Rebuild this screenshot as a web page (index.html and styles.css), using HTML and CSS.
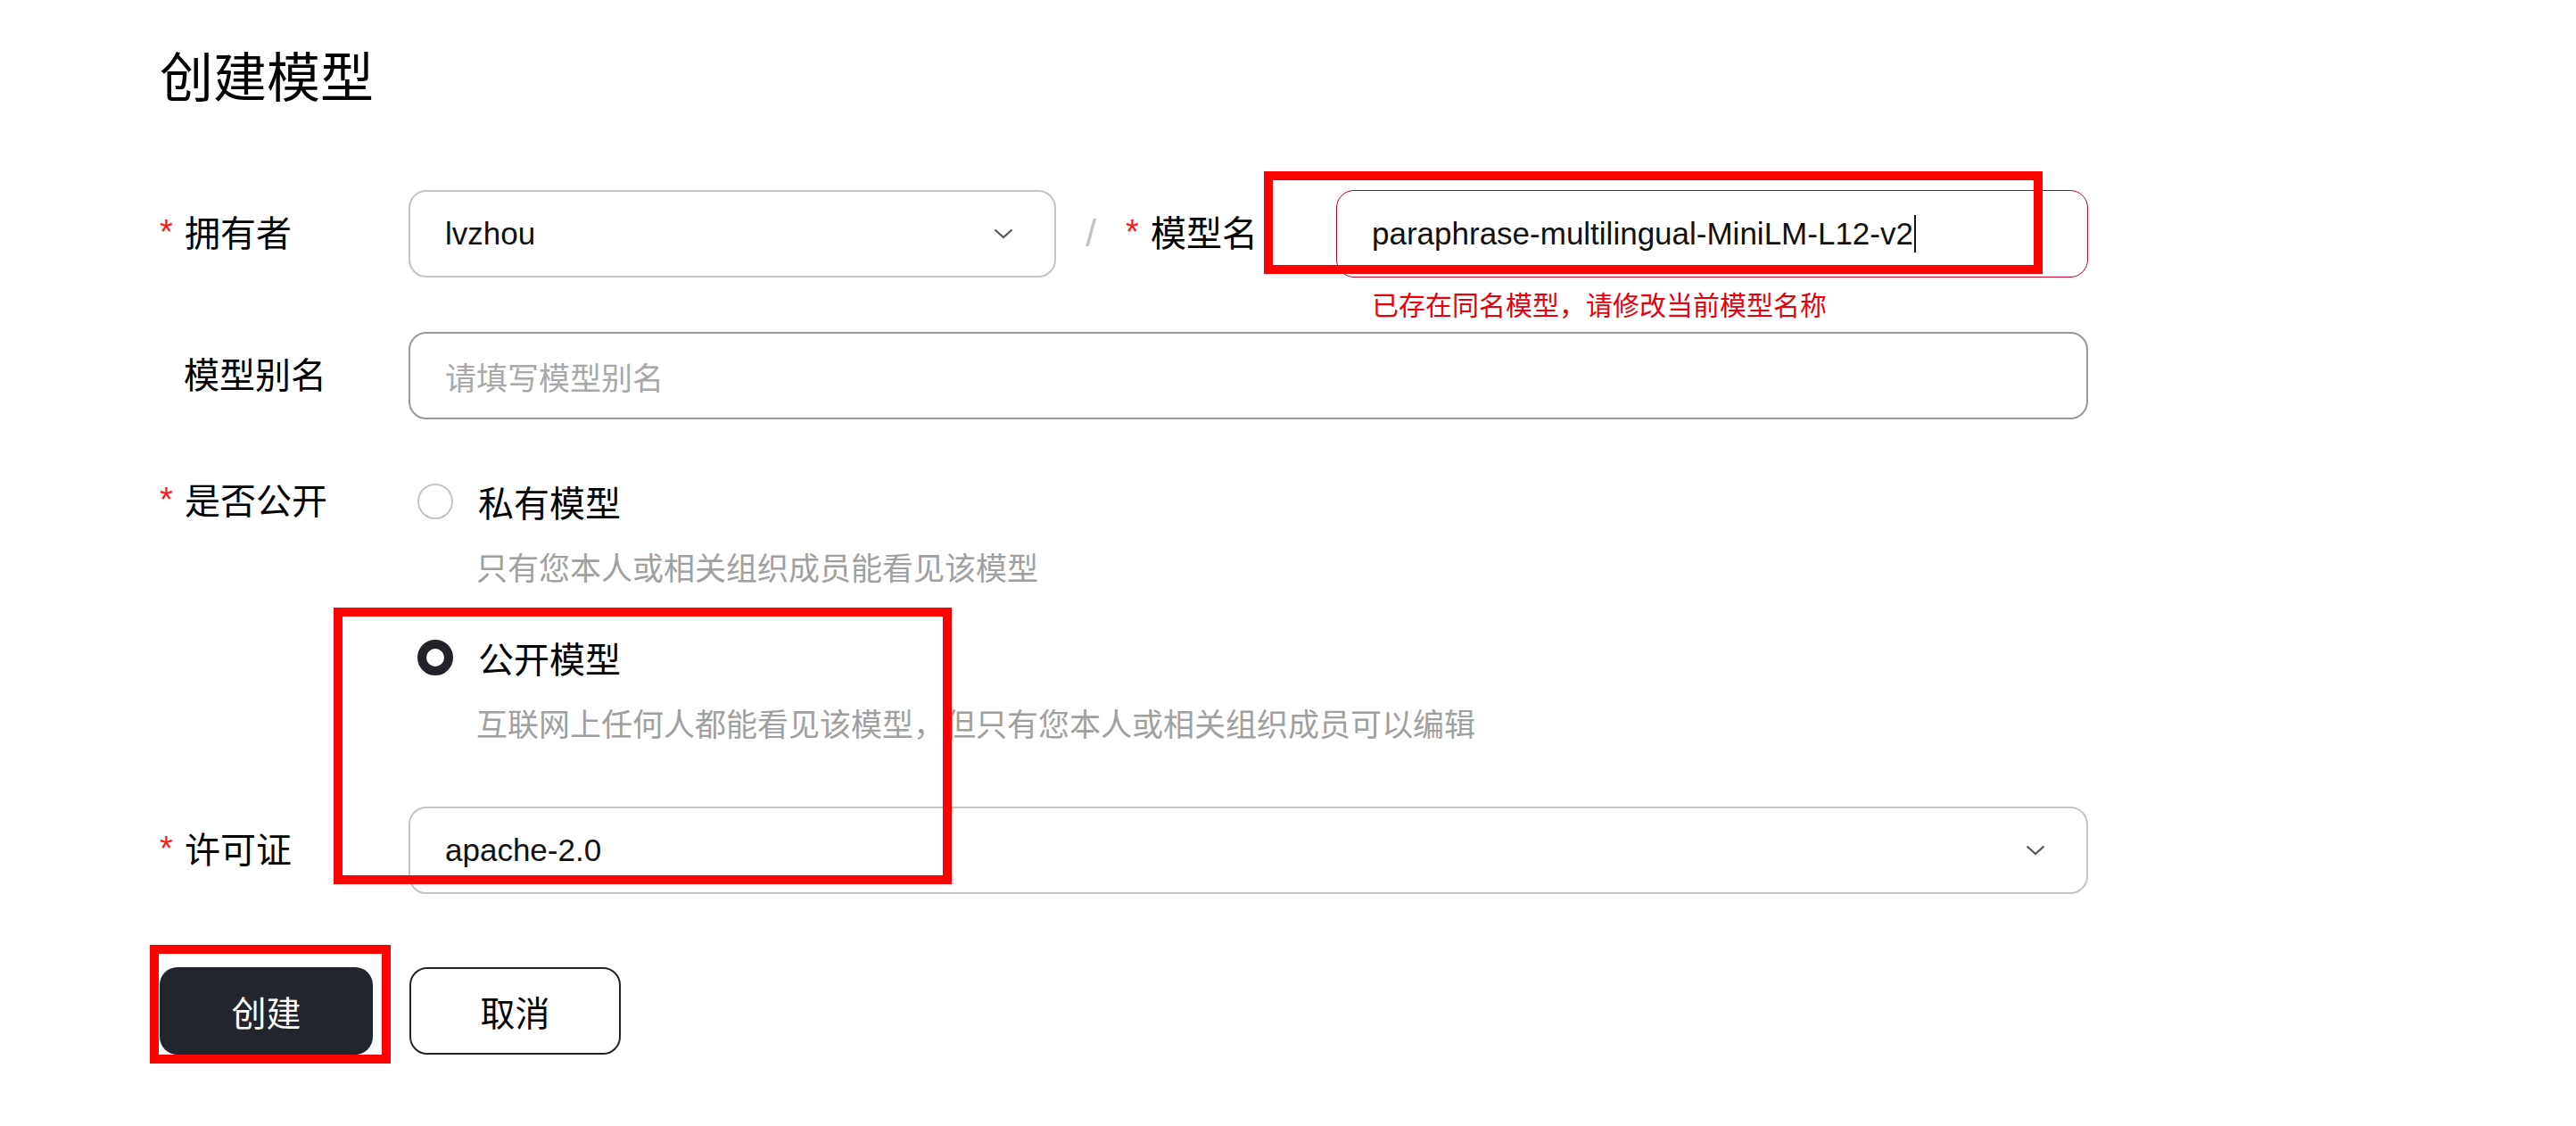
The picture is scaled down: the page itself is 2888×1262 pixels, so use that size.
FILE: index.html
```html
<!DOCTYPE html>
<html lang="zh-CN">
<head>
<meta charset="utf-8">
<title>创建模型</title>
<link rel="stylesheet" href="styles.css">
</head>
<body>
<div class="page">
  <h1 class="title">创建模型</h1>

  <div class="form">
    <div class="row row-top">
      <div class="label"><span class="req">*</span>拥有者</div>
      <div class="select owner">
        <span class="value">lvzhou</span>
        <svg class="chev" width="22" height="12" viewBox="0 0 22 12"><path d="M1.5 1.5 L11 10 L20.5 1.5" fill="none" stroke="#555" stroke-width="2.2"/></svg>
      </div>
      <div class="sep">/</div>
      <div class="label label-name"><span class="req">*</span>模型名</div>
      <div class="name-col">
        <div class="input error-input">
          <span class="value">paraphrase-multilingual-MiniLM-L12-v2</span><span class="caret"></span>
        </div>
        <div class="error-msg">已存在同名模型，请修改当前模型名称</div>
      </div>
    </div>

    <div class="row row-alias">
      <div class="label"><span class="req req-empty"></span>模型别名</div>
      <div class="input alias">
        <span class="placeholder">请填写模型别名</span>
      </div>
    </div>

    <div class="row row-radio">
      <div class="label label-radio"><span class="req">*</span>是否公开</div>
      <div class="radio-group">
        <div class="option">
          <span class="radio"></span>
          <span class="option-text">私有模型</span>
        </div>
        <div class="desc">只有您本人或相关组织成员能看见该模型</div>
        <div class="option option-second">
          <span class="radio checked"></span>
          <span class="option-text">公开模型</span>
        </div>
        <div class="desc">互联网上任何人都能看见该模型，但只有您本人或相关组织成员可以编辑</div>
      </div>
    </div>

    <div class="row row-license">
      <div class="label"><span class="req">*</span>许可证</div>
      <div class="select license">
        <span class="value">apache-2.0</span>
        <svg class="chev" width="22" height="12" viewBox="0 0 22 12"><path d="M1.5 1.5 L11 10 L20.5 1.5" fill="none" stroke="#555" stroke-width="2.2"/></svg>
      </div>
    </div>

    <div class="actions">
      <button class="btn btn-primary">创建</button>
      <button class="btn btn-default">取消</button>
    </div>
  </div>

  <div class="mark mark-name"></div>
  <div class="mark mark-public"></div>
  <div class="mark mark-create"></div>
</div>
</body>
</html>
```

FILE: styles.css
```css
html, body {
  margin: 0;
  padding: 0;
  background: #ffffff;
}

body {
  font-family: "Liberation Sans", "Noto Sans CJK SC", sans-serif;
  color: #111111;
}

.page {
  position: relative;
  width: 2888px;
  height: 1262px;
  padding-left: 179px;
  box-sizing: border-box;
  overflow: hidden;
}

.title {
  margin: 0;
  padding-top: 47px;
  font-size: 60px;
  line-height: 84px;
  font-weight: 400;
  color: #000;
}

.form {
  margin-top: 82px;
}

.row {
  display: flex;
  align-items: center;
}

.row-top {
  align-items: flex-start;
}

.label {
  width: 279px;
  flex: none;
  font-size: 40px;
  line-height: 98px;
  color: #000;
  display: flex;
  align-items: center;
}

.req {
  display: inline-block;
  width: 28px;
  color: #ff1a1a;
  font-size: 38px;
  line-height: 1;
  position: relative;
  top: -2px;
}

.req-empty {
  width: 27px;
}

.select, .input {
  height: 98px;
  box-sizing: border-box;
  border: 2px solid #c4c4c4;
  border-radius: 20px;
  display: flex;
  align-items: center;
  padding: 0 46px 0 39px;
  font-size: 35px;
  color: #111;
  flex: none;
}

.value {
  flex: none;
}

.chev {
  margin-left: auto;
  display: block;
}

.owner {
  width: 726px;
}

.sep {
  width: 78px;
  flex: none;
  text-align: center;
  font-size: 42px;
  line-height: 98px;
  color: #c2c2c2;
}

.label-name {
  width: 236px;
}

.name-col {
  display: flex;
  flex-direction: column;
}

.error-input {
  width: 843px;
  border: 1.5px solid #c0001e;
}

.caret {
  display: inline-block;
  width: 2px;
  height: 42px;
  background: #111;
  margin-left: 1px;
}

.error-msg {
  margin-top: 12px;
  padding-left: 40px;
  font-size: 30px;
  line-height: 40px;
  color: #e8000b;
}

.row-alias {
  margin-top: 9px;
}

.alias {
  width: 1883px;
  border-color: #989898;
}

.placeholder {
  color: #a8a8a8;
}

.row-radio {
  align-items: flex-start;
  margin-top: 64px;
}

.label-radio {
  line-height: 56px;
}

.radio-group {
  display: flex;
  flex-direction: column;
}

.option {
  display: flex;
  align-items: center;
  height: 56px;
  padding-left: 10px;
}

.option-second {
  margin-top: 47px;
}

.radio {
  width: 40px;
  height: 40px;
  box-sizing: border-box;
  border: 2px solid #c4c4c4;
  border-radius: 50%;
  flex: none;
}

.radio.checked {
  border: 10px solid #212329;
}

.option-text {
  margin-left: 28px;
  font-size: 40px;
  color: #000;
}

.desc {
  margin-top: 24px;
  padding-left: 76px;
  font-size: 35px;
  line-height: 48px;
  color: #a0a0a0;
}

.row-license {
  margin-top: 67px;
}

.license {
  width: 1883px;
}

.actions {
  display: flex;
  gap: 41px;
  margin-top: 82px;
}

.btn {
  height: 98px;
  border-radius: 20px;
  font-family: "Liberation Sans", "Noto Sans CJK SC", sans-serif;
  font-size: 39px;
  box-sizing: border-box;
  cursor: pointer;
}

.btn-primary {
  width: 239px;
  background: #22252b;
  color: #fff;
  border: none;
}

.btn-default {
  width: 237px;
  background: #fff;
  color: #000;
  border: 2px solid #22252b;
}

.mark {
  position: absolute;
  border: 10px solid #ff0000;
  box-sizing: border-box;
  pointer-events: none;
}

.mark-name {
  left: 1417px;
  top: 192px;
  width: 873px;
  height: 115px;
}

.mark-public {
  left: 374px;
  top: 681px;
  width: 693px;
  height: 310px;
}

.mark-create {
  left: 168px;
  top: 1059px;
  width: 270px;
  height: 133px;
}
```
